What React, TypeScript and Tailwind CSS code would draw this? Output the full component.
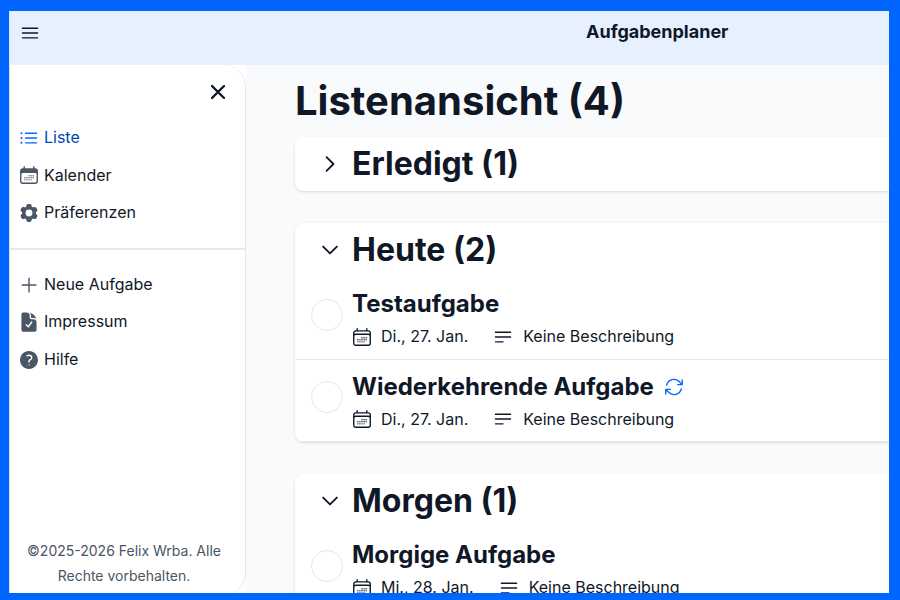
import React, { useState } from "react";
import {
  HiOutlineBars3,
  HiOutlineListBullet,
  HiCalendarDays,
  HiOutlineCalendarDays,
  HiCog6Tooth,
  HiOutlinePlus,
  HiDocumentCheck,
  HiQuestionMarkCircle,
  HiOutlineChevronDown,
  HiOutlineChevronRight,
  HiOutlineBars3BottomLeft,
  HiOutlineArrowPath,
} from "react-icons/hi2";

interface Task {
  title: string;
  date: string;
  description?: string;
  recurring?: boolean;
}

interface TaskGroup {
  name: string;
  count: number;
  open: boolean;
  tasks: Task[];
}

const groups: TaskGroup[] = [
  { name: "Erledigt", count: 1, open: false, tasks: [] },
  {
    name: "Heute",
    count: 2,
    open: true,
    tasks: [
      { title: "Testaufgabe", date: "Di., 27. Jan." },
      { title: "Wiederkehrende Aufgabe", date: "Di., 27. Jan.", recurring: true },
    ],
  },
  {
    name: "Morgen",
    count: 1,
    open: true,
    tasks: [{ title: "Morgige Aufgabe", date: "Mi., 28. Jan." }],
  },
];

const views = [
  { label: "Liste", icon: HiOutlineListBullet, active: true },
  { label: "Kalender", icon: HiCalendarDays },
  { label: "Präferenzen", icon: HiCog6Tooth },
];

const actions = [
  { label: "Neue Aufgabe", icon: HiOutlinePlus },
  { label: "Impressum", icon: HiDocumentCheck },
  { label: "Hilfe", icon: HiQuestionMarkCircle },
];

function NavItem({
  label,
  icon: Icon,
  active,
}: {
  label: string;
  icon: React.ComponentType<{ className?: string }>;
  active?: boolean;
}) {
  return (
    <li>
      <a
        className={`flex h-[37.5px] items-center gap-1 pl-2 ${active ? "text-[#0047b3]" : "text-gray-900"}`}
      >
        <Icon
          className={`size-[22px] shrink-0 ${active ? "text-[#0066ff]" : "text-gray-600"}`}
        />
        <span className="pb-[1.2px]">{label}</span>
      </a>
    </li>
  );
}

function Sidebar() {
  return (
    <aside className="w-[236px] shrink-0 bg-white">
      <div className="flex h-[530px] flex-col rounded-r-[22px] border-r border-gray-200">
        <div className="flex h-[54px] shrink-0 items-center justify-end pr-[20px]">
          <button aria-label="Menü schließen">
            <svg className="size-[14px] text-gray-900" viewBox="0 0 14 14" fill="none">
              <path
                d="m1 1 6 6m0 0 6 6M7 7l6-6M7 7l-6 6"
                stroke="currentColor"
                strokeWidth="2.4"
                strokeLinecap="round"
                strokeLinejoin="round"
              />
            </svg>
          </button>
        </div>
        <ul className="border-b-2 border-gray-200 pb-[16.5px]">
          {views.map((item) => (
            <NavItem key={item.label} {...item} />
          ))}
        </ul>
        <ul className="pt-[15.8px]">
          {actions.map((item) => (
            <NavItem key={item.label} {...item} />
          ))}
        </ul>
        <p className="mt-auto pr-[22px] pb-[7px] pl-[15px] text-center text-sm leading-[25px] text-gray-600">
          ©2025-2026 Felix Wrba. Alle Rechte vorbehalten.
        </p>
      </div>
    </aside>
  );
}

function TaskRow({ task }: { task: Task }) {
  return (
    <li className="flex h-[82.5px] items-start border-b border-gray-200 pl-4">
      <button
        aria-label="Erledigen"
        className="mt-[21.5px] size-8 shrink-0 rounded-full border border-gray-200"
      />
      <div className="pt-[11px] pl-[9px]">
        <h3 className="flex h-8 items-center gap-[9px] text-2xl font-bold">
          {task.title}
          {task.recurring && <HiOutlineArrowPath className="size-[22px] text-[#0066ff]" />}
        </h3>
        <div className="flex h-[33px] items-center">
          <HiOutlineCalendarDays className="-ml-px size-[22px]" />
          <span className="ml-2 pb-[0.6px]">{task.date}</span>
          <HiOutlineBars3BottomLeft className="ml-6 size-[22px]" />
          <span className="ml-[9px] pb-[0.6px]">
            {task.description ?? "Keine Beschreibung"}
          </span>
        </div>
      </div>
    </li>
  );
}

function GroupCard({ group }: { group: TaskGroup }) {
  const [open, setOpen] = useState(group.open);
  const Chevron = open ? HiOutlineChevronDown : HiOutlineChevronRight;

  return (
    <section className="mb-8 overflow-hidden rounded-lg bg-white shadow-sm">
      <button
        onClick={() => setOpen(!open)}
        className="flex h-[54px] w-full items-center pl-6"
      >
        <Chevron className="size-[22px] stroke-2" />
        <h2 className="mb-px ml-[11px] text-[32px] leading-none font-bold">
          {group.name} ({group.count})
        </h2>
      </button>
      {open && (
        <ul>
          {group.tasks.map((task) => (
            <TaskRow key={task.title} task={task} />
          ))}
        </ul>
      )}
    </section>
  );
}

export default function App() {
  return (
    <div className="h-[600px] w-[900px] overflow-hidden bg-[#0066ff] pt-[11px] pr-[11px] pb-[7px] pl-[9px] font-['Inter',sans-serif] text-gray-900">
      <div className="flex h-full flex-col overflow-hidden border-l border-[#d4e4ff] bg-gray-50 whitespace-nowrap">
        <header className="flex h-[54px] shrink-0 items-start bg-[#e6f0ff]">
          <button aria-label="Menü" className="mt-[11px] ml-[9px]">
            <HiOutlineBars3 className="size-[22px]" />
          </button>
          <h1 className="mt-[7px] ml-[545px] text-lg leading-7 font-bold">
            Aufgabenplaner
          </h1>
        </header>
        <div className="flex min-h-0 flex-1">
          <div className="whitespace-normal">
            <Sidebar />
          </div>
          <main className="min-w-0 flex-1 pl-[49px]">
            <h1 className="flex h-[72px] items-center text-[40px] leading-none font-bold">
              Listenansicht (4)
            </h1>
            <div className="w-[800px]">
              {groups.map((group) => (
                <GroupCard key={group.name} group={group} />
              ))}
            </div>
          </main>
        </div>
      </div>
    </div>
  );
}
